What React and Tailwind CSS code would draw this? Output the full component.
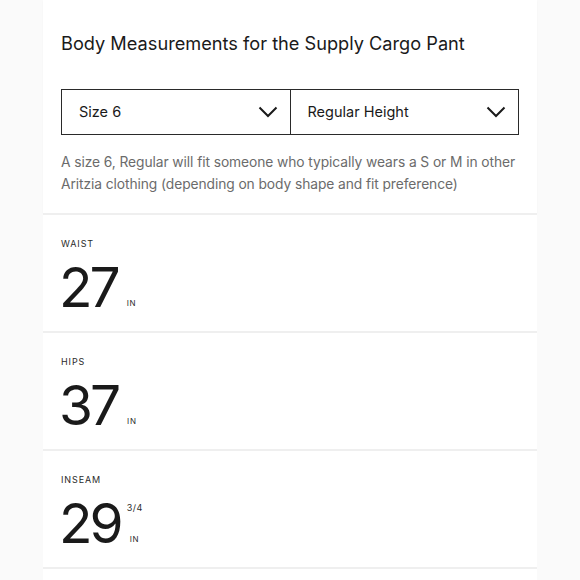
import React from "react";

const measurements = [
  { label: "WAIST", value: "27" },
  { label: "HIPS", value: "37" },
  { label: "INSEAM", value: "29", fraction: "3/4" },
];

function Chevron() {
  return (
    <svg width="20" height="12" viewBox="0 0 20 12" fill="none">
      <path d="M1.5 1.5 L10 10 L18.5 1.5" stroke="#1a1a1a" strokeWidth="2" />
    </svg>
  );
}

function Select({ label, className = "" }) {
  return (
    <div
      className={`flex-1 h-full flex items-center justify-between pl-[17px] pr-[12px] ${className}`}
    >
      <span className="text-[14.5px] text-[#1a1a1a]">{label}</span>
      <Chevron />
    </div>
  );
}

export default function App() {
  return (
    <div
      className="min-h-[580px] bg-[#fafafa] flex justify-center"
      style={{ fontFamily: "Inter, 'Noto Sans', sans-serif" }}
    >
      <div className="w-[494px] flex flex-col">
        {/* Header card */}
        <div className="bg-white px-[18px] pt-[32px] pb-[18px] shadow-[0_1px_2px_rgba(0,0,0,0.03)]">
          <h1 className="text-[18.2px] leading-[22px] text-[#1a1a1a]">
            Body Measurements for the Supply Cargo Pant
          </h1>
          <div className="mt-[35px] h-[46px] flex border-[1.5px] border-[#2a2a2a]">
            <Select label="Size 6" className="border-r-[1.5px] border-[#2a2a2a]" />
            <Select label="Regular Height" />
          </div>
          <p className="mt-[16px] text-[13.8px] leading-[22px] text-[#6b6b6b] tracking-[-0.08px]">
            A size 6, Regular will fit someone who typically wears a S or M in
            other Aritzia clothing (depending on body shape and fit preference)
          </p>
        </div>

        {/* Measurement rows */}
        {measurements.map((m) => (
          <div
            key={m.label}
            className="bg-white border-t-2 border-[#efefef] h-[118px] px-[18px] pt-[22px]"
          >
            <div className="text-[9px] tracking-[0.9px] text-[#2a2a2a]">
              {m.label}
            </div>
            <div className="flex items-end mt-[10px]">
              <span className="-ml-[2px] text-[55px] leading-[52px] text-[#1a1a1a] tracking-[-3px]">
                {m.value}
              </span>
              <div className="relative ml-[9px] mb-[4px]">
                {m.fraction && (
                  <div className="absolute bottom-[30px] left-[-3px] text-[9px] tracking-[0.5px] text-[#2a2a2a]">
                    {m.fraction}
                  </div>
                )}
                <div className="text-[8px] tracking-[0.8px] text-[#2a2a2a]">
                  IN
                </div>
              </div>
            </div>
          </div>
        ))}
        <div className="bg-white border-t-2 border-[#efefef] flex-1" />
      </div>
    </div>
  );
}
